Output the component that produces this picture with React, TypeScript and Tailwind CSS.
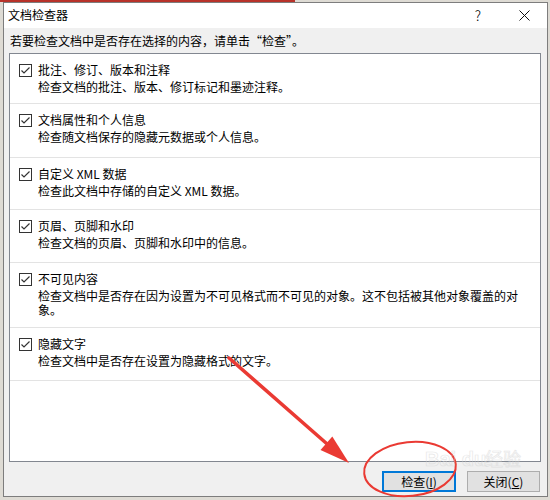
import React from "react";

const items = [
  { title: "批注、修订、版本和注释", desc: "检查文档的批注、版本、修订标记和墨迹注释。", h: "h-[50px]" },
  { title: "文档属性和个人信息", desc: "检查随文档保存的隐藏元数据或个人信息。", h: "h-[54px]" },
  { title: "自定义 XML 数据", desc: "检查此文档中存储的自定义 XML 数据。", h: "h-[52px]" },
  { title: "页眉、页脚和水印", desc: "检查文档的页眉、页脚和水印中的信息。", h: "h-[53px]" },
  {
    title: "不可见内容",
    desc: "检查文档中是否存在因为设置为不可见格式而不可见的对象。这不包括被其他对象覆盖的对象。",
    h: "h-[65px]",
  },
  { title: "隐藏文字", desc: "检查文档中是否存在设置为隐藏格式的文字。", h: "h-[53px]" },
];

function CheckBox() {
  return (
    <svg width="13" height="13" viewBox="0 0 13 13" className="shrink-0 mt-[2px]">
      <rect x="0.5" y="0.5" width="12" height="12" fill="#fff" stroke="#333" />
      <polyline points="2.5,6.5 5,9 10.5,3.5" fill="none" stroke="#333" strokeWidth="1.2" />
    </svg>
  );
}

function App() {
  return (
    <div
      className="relative w-[550px] h-[500px] overflow-hidden bg-[#dedbd4] text-black"
      style={{ fontFamily: '"Noto Sans CJK SC", "Noto Sans", sans-serif' }}
    >
      <div className="h-[2px] w-[295px] bg-[#b8322a]" />
      <div className="ml-[3px] w-[545px] h-[495px] border border-[#7d7d7d] flex flex-col">
        <div className="h-[25px] bg-white flex items-center justify-between">
          <span className="pl-[4px] text-[12px] leading-[16px] -mt-[2px]">文档检查器</span>
          <div className="flex">
            <div className="w-[46px] h-[25px] flex items-center justify-center text-[14px] font-light">?</div>
            <div className="w-[46px] h-[25px] flex items-center justify-center">
              <svg width="11" height="11" viewBox="0 0 11 11">
                <path d="M0.5 0.5 L10.5 10.5 M10.5 0.5 L0.5 10.5" stroke="#111" strokeWidth="1" />
              </svg>
            </div>
          </div>
        </div>
        <div className="flex-1 bg-[#f0f0f0] flex flex-col">
          <p className="pt-[5px] pl-[6px] text-[12px] leading-[16px]">
            若要检查文档中是否存在选择的内容，请单击“检查”。
          </p>
          <div className="mt-[4px] ml-[5px] w-[532px] h-[409px] bg-white border border-[#828790]">
            {items.map((it) => (
              <div key={it.title} className={`${it.h} border-b border-[#e3e3e3] flex gap-[6px] pl-[9px] pr-[20px] pt-[8px]`}>
                <CheckBox />
                <div className="flex flex-col text-[12px]">
                  <span className="leading-[16px]">{it.title}</span>
                  <span className="leading-[14px] mt-[2px]">{it.desc}</span>
                </div>
              </div>
            ))}
          </div>
          <div className="mt-[9px] flex justify-end gap-[11px] pr-[7px]">
            <button className="w-[74px] h-[21px] bg-[#e1e1e1] border-2 border-[#0078d7] text-[12px] leading-[16px] flex items-center justify-center">
              检查(<span className="underline">I</span>)
            </button>
            <button className="w-[73px] h-[21px] bg-[#e1e1e1] border border-[#adadad] text-[12px] leading-[16px] flex items-center justify-center">
              关闭(<span className="underline">C</span>)
            </button>
          </div>
        </div>
      </div>
      <svg className="absolute inset-0 pointer-events-none" width="550" height="500" viewBox="0 0 550 500">
        <line x1="229" y1="358" x2="334" y2="450" stroke="#ea3a33" strokeWidth="3.5" strokeLinecap="round" />
        <polygon points="349,463 320.5,450.1 332.3,436.5" fill="#ea3a33" />
        <ellipse cx="410" cy="469" rx="46" ry="27" fill="none" stroke="#ea3a33" strokeWidth="2" transform="rotate(-6 410 469)" />
        <text x="425" y="466" fontSize="20" fontWeight="bold" fill="none" stroke="#d4d4d4" strokeWidth="0.7" opacity="0.55" fontFamily="Liberation Sans, sans-serif">
          Bai du
        </text>
        <text x="485" y="466" fontSize="18" fill="none" stroke="#d4d4d4" strokeWidth="0.7" opacity="0.55" fontFamily="Noto Sans CJK SC, sans-serif">
          经验
        </text>
      </svg>
    </div>
  );
}

export default App;
